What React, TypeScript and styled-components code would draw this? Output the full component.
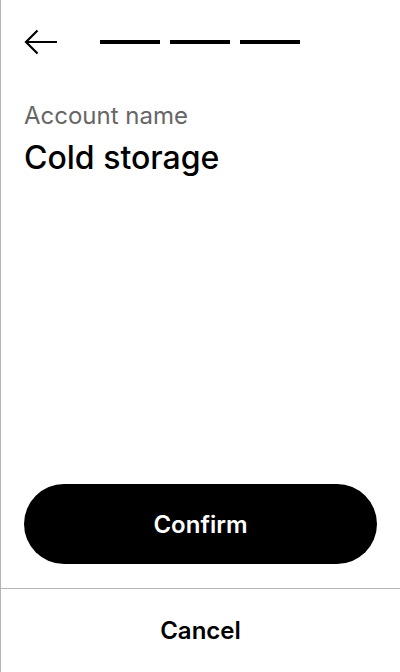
import { createGlobalStyle, styled } from "styled-components";

const Global = createGlobalStyle`
  html, body {
    margin: 0;
    padding: 0;
    background: #fff;
  }
  body {
    font-family: Inter, "Liberation Sans", sans-serif;
  }
`;

const Screen = styled.div`
  box-sizing: border-box;
  width: 400px;
  height: 672px;
  border-left: 1px solid #b4b4b4;
  display: flex;
  flex-direction: column;
  color: #000;
`;

const Header = styled.div`
  display: flex;
  align-items: center;
  height: 26px;
  padding: 30px 0 0 23px;
`;

const BackButton = styled.button`
  border: none;
  background: none;
  padding: 0;
  width: 34px;
  height: 28px;
  display: flex;
  align-items: center;
  cursor: pointer;
`;

const Steps = styled.div`
  display: flex;
  gap: 10px;
  margin-left: 42px;
  margin-bottom: 2px;
`;

const Step = styled.div<{ $active: boolean }>`
  width: 60px;
  height: 4px;
  background: ${(p) => (p.$active ? "#000" : "#ccc")};
`;

const Body = styled.div`
  flex: 1;
  padding: 0 23px;
  margin-top: 45px;
`;

const Label = styled.div`
  font-size: 24px;
  color: #666;
  line-height: 30px;
`;

const Value = styled.div`
  font-size: 32px;
  line-height: 40px;
  margin-top: 7px;
  font-weight: 500;
`;

const Actions = styled.div`
  padding: 0 23px 24px;
`;

const ConfirmButton = styled.button`
  width: 100%;
  height: 80px;
  border: none;
  border-radius: 40px;
  background: #000;
  color: #fff;
  font-family: inherit;
  font-size: 24px;
  font-weight: 600;
  cursor: pointer;
`;

const Footer = styled.div`
  border-top: 1px solid #b4b4b4;
  height: 83px;
  display: flex;
  align-items: center;
  justify-content: center;
`;

const CancelButton = styled.button`
  border: none;
  background: none;
  padding: 0;
  font-family: inherit;
  font-size: 24px;
  font-weight: 600;
  color: #000;
  cursor: pointer;
`;

export default function App() {
  const steps = [true, true, true];
  return (
    <>
      <Global />
      <Screen>
        <Header>
          <BackButton aria-label="Back">
            <svg width="34" height="28" viewBox="0 0 34 28" fill="none">
              <path
                d="M33 13H2.5M13.5 1.5L2 13l11.5 11.5"
                stroke="#000"
                strokeWidth="2.2"
              />
            </svg>
          </BackButton>
          <Steps>
            {steps.map((active, i) => (
              <Step key={i} $active={active} />
            ))}
          </Steps>
        </Header>
        <Body>
          <Label>Account name</Label>
          <Value>Cold storage</Value>
        </Body>
        <Actions>
          <ConfirmButton>Confirm</ConfirmButton>
        </Actions>
        <Footer>
          <CancelButton>Cancel</CancelButton>
        </Footer>
      </Screen>
    </>
  );
}
